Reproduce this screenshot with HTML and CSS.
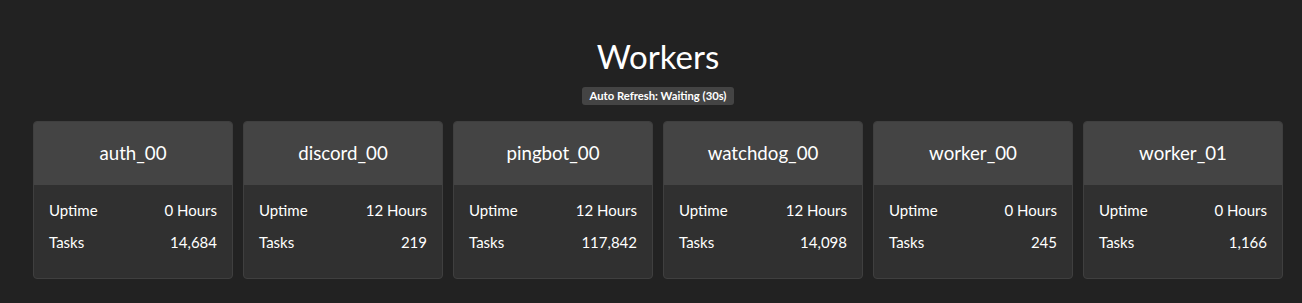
FILE: index.html
```html
<!DOCTYPE html>
<html lang="en">
  <head>
    <meta charset="UTF-8" />
    <meta name="viewport" content="width=device-width, initial-scale=1.0" />
    <title>Workers</title>
    <link rel="stylesheet" href="styles.css">
  </head>
  <body>
    <div class="page">
      <h1>Workers</h1>
      <div class="refresh"><span class="badge">Auto Refresh: Waiting (30s)</span></div>

      <div class="workers">
        <div class="card">
          <div class="card-head">auth_00</div>
          <div class="card-body">
            <div class="row"><span>Uptime</span><span>0 Hours</span></div>
            <div class="row"><span>Tasks</span><span>14,684</span></div>
          </div>
        </div>
        <div class="card">
          <div class="card-head">discord_00</div>
          <div class="card-body">
            <div class="row"><span>Uptime</span><span>12 Hours</span></div>
            <div class="row"><span>Tasks</span><span>219</span></div>
          </div>
        </div>
        <div class="card">
          <div class="card-head">pingbot_00</div>
          <div class="card-body">
            <div class="row"><span>Uptime</span><span>12 Hours</span></div>
            <div class="row"><span>Tasks</span><span>117,842</span></div>
          </div>
        </div>
        <div class="card">
          <div class="card-head">watchdog_00</div>
          <div class="card-body">
            <div class="row"><span>Uptime</span><span>12 Hours</span></div>
            <div class="row"><span>Tasks</span><span>14,098</span></div>
          </div>
        </div>
        <div class="card">
          <div class="card-head">worker_00</div>
          <div class="card-body">
            <div class="row"><span>Uptime</span><span>0 Hours</span></div>
            <div class="row"><span>Tasks</span><span>245</span></div>
          </div>
        </div>
        <div class="card">
          <div class="card-head">worker_01</div>
          <div class="card-body">
            <div class="row"><span>Uptime</span><span>0 Hours</span></div>
            <div class="row"><span>Tasks</span><span>1,166</span></div>
          </div>
        </div>
      </div>
    </div>
  </body>
</html>
```

FILE: styles.css
```css
body {
  margin: 0;
  background-color: #222222;
  color: #ffffff;
  font-family: Lato, "Open Sans", sans-serif;
}

.page {
  padding: 33px 19px 0 33px;
}

h1 {
  margin: 0;
  font-size: 33px;
  font-weight: 400;
  line-height: 46px;
  text-align: center;
}

.refresh {
  text-align: center;
  margin-top: 6px;
  line-height: 18px;
}

.badge {
  display: inline-block;
  background-color: #444444;
  border-radius: 3px;
  padding: 0 8px;
  font-size: 11.25px;
  font-weight: 700;
  line-height: 18px;
}

.workers {
  display: flex;
  gap: 10px;
  margin-top: 16px;
}

.card {
  width: 200px;
  box-sizing: border-box;
  background-color: #303030;
  border: 1px solid #3f3f3f;
  border-radius: 4px;
  overflow: hidden;
}

.card-head {
  background-color: #444444;
  height: 63px;
  line-height: 63px;
  text-align: center;
  font-size: 18.7px;
}

.card-body {
  padding: 9px 15px 20px 15px;
  font-size: 15px;
}

.row {
  display: flex;
  justify-content: space-between;
  line-height: 32px;
}
```
